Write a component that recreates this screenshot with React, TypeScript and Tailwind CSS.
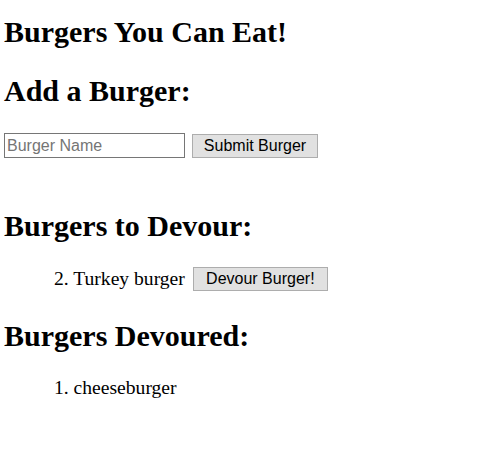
import React from "react";

interface Burger {
    id: number
    name: string
}

const toDevour: Burger[] = [{ id: 2, name: "Turkey burger" }];
const devoured: Burger[] = [{ id: 1, name: "cheeseburger" }];

const headingCls = "text-[30px] leading-[34px] h-[34px] font-bold";
const buttonCls =
    "h-[24px] bg-[#e1e1e1] border border-[#adadad] text-[16px] leading-[22px] text-black text-center";

const App: React.FC = () => {
    return (
        <div className="min-h-[463px] bg-white text-black pl-[4px] pt-[15px] font-['Liberation_Serif','Times_New_Roman',serif]">

            <h1 className={headingCls}>Burgers You Can Eat!</h1>

            <h2 className={`${headingCls} mt-[25px]`}>Add a Burger:</h2>

            <form className="flex items-center mt-[25px]" onSubmit={(e) => e.preventDefault()}>
                <input
                    type="text"
                    placeholder="Burger Name"
                    className="w-[181px] h-[25px] border border-[#767676] px-[2px] text-[16px] font-['Liberation_Sans',Arial,sans-serif] placeholder:text-[#757575] outline-none"
                />
                <button type="submit" className={`${buttonCls} ml-[7px] w-[126px] mt-[1px] font-['Liberation_Sans',Arial,sans-serif]`}>
                    Submit Burger
                </button>
            </form>

            <h2 className={`${headingCls} mt-[51px]`}>Burgers to Devour:</h2>

            <ul className="pl-[50px] mt-[24px]">
                {toDevour.map((b) => (
                    <li key={b.id} className="flex items-center h-[24px]">
                        <span className="text-[19.6px] leading-[24px]">{b.id}. {b.name}</span>
                        <button className={`${buttonCls} ml-[8px] w-[135px] font-['Liberation_Sans',Arial,sans-serif]`}>
                            Devour Burger!
                        </button>
                    </li>
                ))}
            </ul>

            <h2 className={`${headingCls} mt-[28px]`}>Burgers Devoured:</h2>

            <ul className="pl-[50px] mt-[23px]">
                {devoured.map((b) => (
                    <li key={b.id} className="text-[19.6px] leading-[24px] h-[24px]">
                        {b.id}. {b.name}
                    </li>
                ))}
            </ul>

        </div>
    );
};

export default App;
